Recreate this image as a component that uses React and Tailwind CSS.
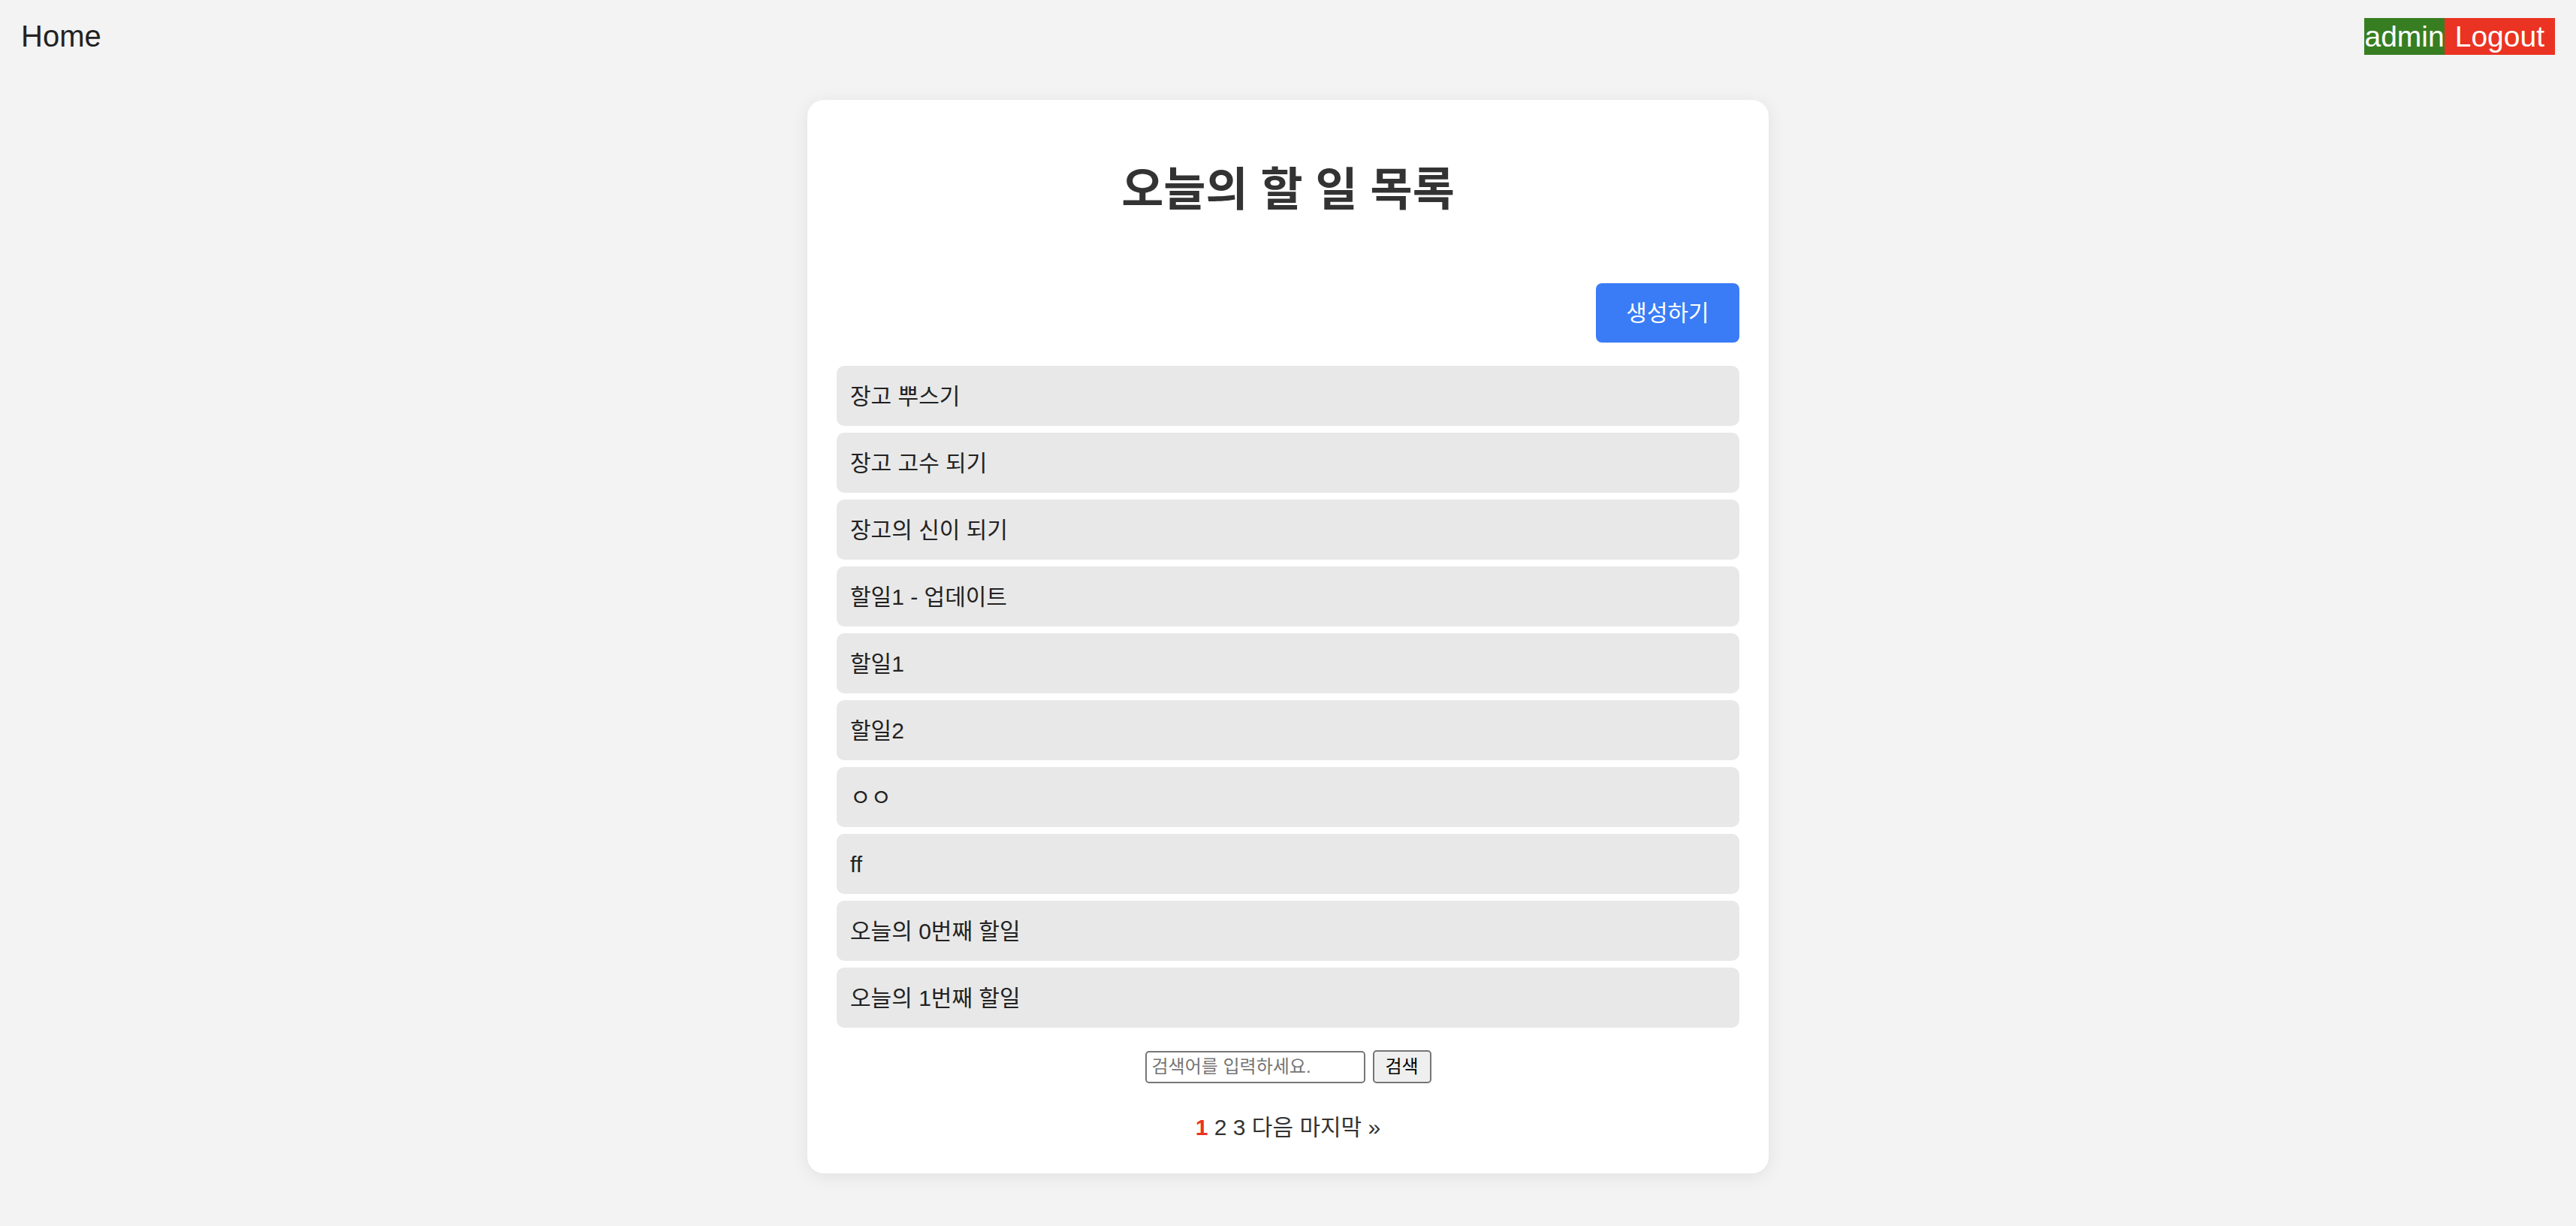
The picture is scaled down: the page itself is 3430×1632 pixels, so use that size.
import React, { useState } from "react";

const todos = [
  "장고 뿌스기",
  "장고 고수 되기",
  "장고의 신이 되기",
  "할일1 - 업데이트",
  "할일1",
  "할일2",
  "ㅇㅇ",
  "ff",
  "오늘의 0번째 할일",
  "오늘의 1번째 할일",
];

const App = () => {
  const [keyword, setKeyword] = useState("");

  return (
    <div className="min-h-screen bg-[#f3f3f3] font-['Liberation_Sans','Noto_Sans_CJK_KR',sans-serif] text-[#222]">
      <header className="flex justify-between items-start px-[28px] pt-[24px]">
        <a href="#" className="text-[40px] leading-[49px] text-[#222]">Home</a>
        <div className="flex text-[39px] leading-[49px] text-white">
          <span className="bg-[#377e22]">admin</span>
          <a href="#" className="bg-[#ea3323] px-[14px]">Logout</a>
        </div>
      </header>

      <div className="w-[1280px] mx-auto mt-[60px] bg-white rounded-[22px] shadow-[0_4px_24px_rgba(0,0,0,0.08)] px-[39px] pt-[80px] pb-[41px]">
        <h1 className="text-center text-[61px] leading-[80px] font-bold text-[#333]">
          오늘의 할 일 목록
        </h1>

        <div className="flex justify-end mt-[84px]">
          <button className="w-[191px] h-[79px] rounded-[8px] bg-[#3a7cf6] text-white text-[30px]">
            생성하기
          </button>
        </div>

        <ul className="mt-[31px] flex flex-col gap-[9px]">
          {todos.map((todo, i) => (
            <li
              key={i}
              className="h-[80px] flex items-center bg-[#e8e8e8] rounded-[10px] pl-[18px] text-[30px] text-[#222]"
            >
              {todo}
            </li>
          ))}
        </ul>

        <form
          onSubmit={(e) => e.preventDefault()}
          className="mt-[30px] flex justify-center items-center gap-[10px]"
        >
          <input
            type="text"
            value={keyword}
            onChange={(e) => setKeyword(e.target.value)}
            placeholder="검색어를 입력하세요."
            className="w-[293px] h-[43px] border-2 border-[#767676] rounded-[5px] px-[7px] text-[24px] text-black placeholder:text-[#757575] bg-white"
          />
          <button
            type="submit"
            className="w-[78px] h-[44px] border-2 border-[#767676] rounded-[5px] bg-[#efefef] text-[24px] text-black"
          >
            검색
          </button>
        </form>

        <div className="mt-[39px] text-center text-[30px] leading-[40px] text-[#333]">
          <span className="text-[#ea3323] font-bold">1</span>{" "}
          <a href="#">2</a> <a href="#">3</a> <a href="#">다음</a>{" "}
          <a href="#">마지막 »</a>
        </div>
      </div>
    </div>
  );
};

export default App;
